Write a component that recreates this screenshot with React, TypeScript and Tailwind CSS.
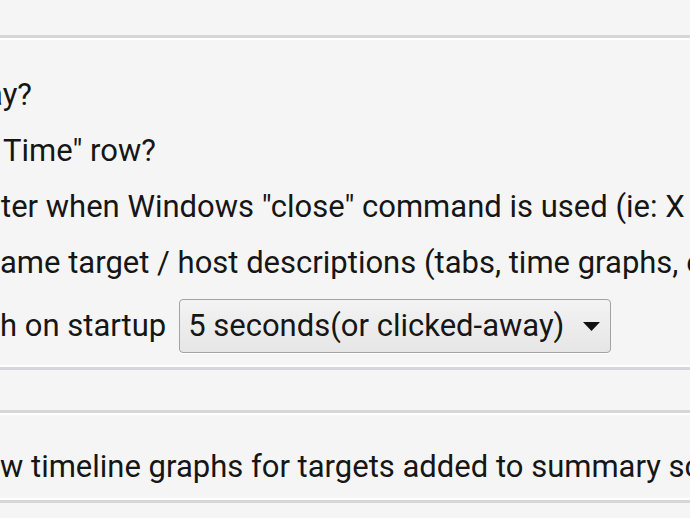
import React from "react";

const Groove = ({ flip }: { flip?: boolean }) =>
  flip ? (
    <div>
      <div className="h-[2px] bg-white" />
      <div className="h-[3px] bg-[#d6d6da]" />
    </div>
  ) : (
    <div>
      <div className="h-[3px] bg-[#d6d6da]" />
      <div className="h-[2px] bg-white" />
    </div>
  );

const Row = ({ children, offset }: { children: React.ReactNode; offset: string }) => (
  <div className={`h-[56px] leading-[56px] whitespace-nowrap ${offset}`}>{children}</div>
);

const App = () => {
  return (
    <div
      className="w-[690px] h-[518px] overflow-hidden bg-[#f5f5f5] text-[#161616] text-[31px]"
      style={{ fontFamily: "Roboto, 'Noto Sans', sans-serif" }}
    >
      <div className="h-[35px]" />
      <Groove />
      <div className="pt-[27px]">
        <Row offset="-ml-[14px]">ay?</Row>
        <Row offset="ml-[3px]">Time" row?</Row>
        <Row offset="ml-[1px]">ter when Windows "close" command is used (ie: X close button)</Row>
        <Row offset="-ml-[16px]">same target / host descriptions (tabs, time graphs, etc)</Row>
        <div className="flex items-center pt-[7px] whitespace-nowrap">
          <span className="leading-[56px]">h on startup</span>
          <div className="ml-[13px] w-[432px] h-[54px] flex items-center justify-between rounded-[4px] border border-[#a3a3a3] bg-gradient-to-b from-[#f3f3f3] to-[#e6e6e6] pl-[8px] pr-[10px] shadow-[0_1px_0_#ffffff]">
            <span>5 seconds(or clicked-away)</span>
            <svg width="17" height="9" viewBox="0 0 17 9">
              <polygon points="0,0 17,0 8.5,9" fill="#111" />
            </svg>
          </div>
        </div>
      </div>
      <div className="h-[11px]" />
      <Groove flip />
      <div className="h-[40px]" />
      <Groove />
      <div className="pt-[24px]">
        <Row offset="ml-0">w timeline graphs for targets added to summary screen</Row>
      </div>
      <div className="h-[3px]" />
      <Groove flip />
    </div>
  );
};

export default App;
